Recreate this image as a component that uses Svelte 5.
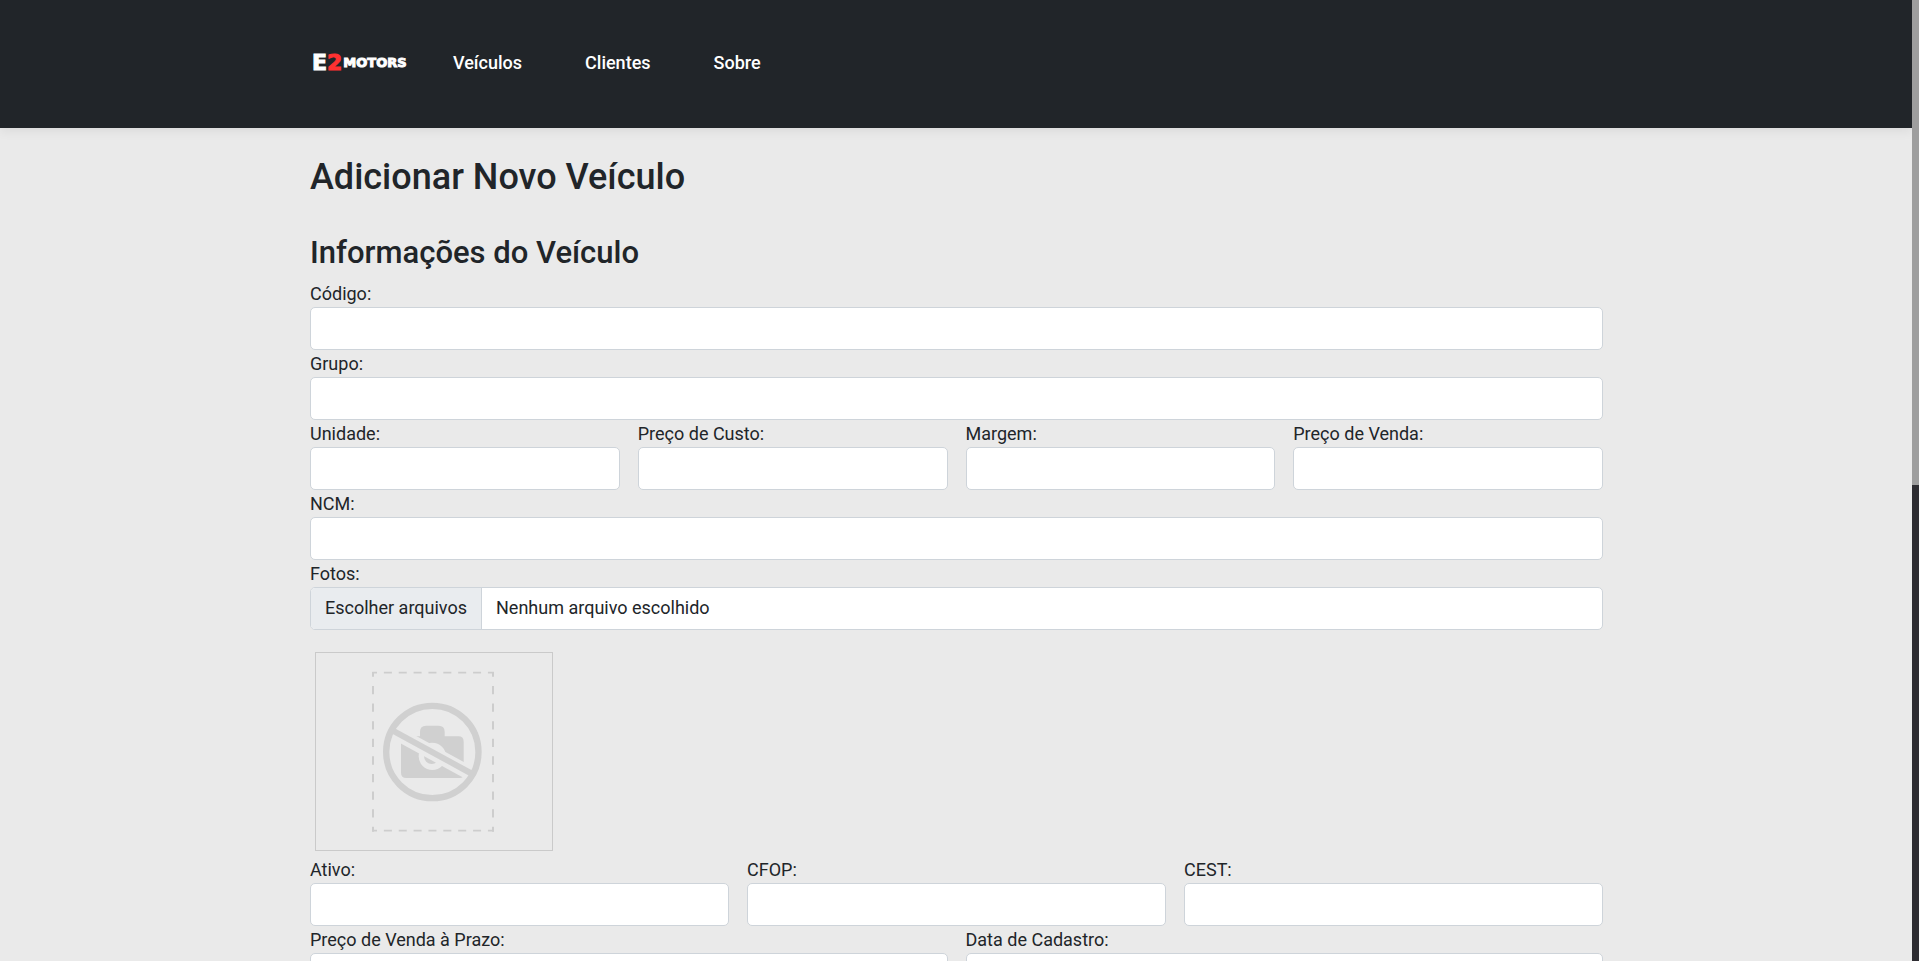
<script>
  const links = ['Veículos', 'Clientes', 'Sobre'];

  const topRows = [
    [{ id: 'codigo', label: 'Código:' }],
    [{ id: 'grupo', label: 'Grupo:' }],
    [
      { id: 'unidade', label: 'Unidade:' },
      { id: 'preco-custo', label: 'Preço de Custo:' },
      { id: 'margem', label: 'Margem:' },
      { id: 'preco-venda', label: 'Preço de Venda:' }
    ],
    [{ id: 'ncm', label: 'NCM:' }]
  ];

  const bottomRows = [
    [
      { id: 'ativo', label: 'Ativo:' },
      { id: 'cfop', label: 'CFOP:' },
      { id: 'cest', label: 'CEST:' }
    ],
    [
      { id: 'preco-prazo', label: 'Preço de Venda à Prazo:' },
      { id: 'data-cadastro', label: 'Data de Cadastro:' }
    ]
  ];
</script>

{#snippet fieldRow(fields)}
  <div class="row">
    {#each fields as field (field.id)}
      <div class="field">
        <label for={field.id}>{field.label}</label>
        <input type="text" id={field.id} name={field.id} />
      </div>
    {/each}
  </div>
{/snippet}

<div class="screen">
  <div class="page">
    <header>
      <nav class="container">
        <a class="brand" href="#inicio"><span class="big">E<span class="red">2</span></span><span class="small">MOTORS</span></a>
        <ul>
          {#each links as link}
            <li><a href="#{link.toLowerCase()}">{link}</a></li>
          {/each}
        </ul>
      </nav>
    </header>

    <main class="container">
      <h1>Adicionar Novo Veículo</h1>
      <form>
        <h2>Informações do Veículo</h2>
        {#each topRows as fields}
          {@render fieldRow(fields)}
        {/each}

        <div class="field">
          <label for="fotos">Fotos:</label>
          <div class="file">
            <input type="file" id="fotos" name="fotos" multiple />
            <label for="fotos">
              <span class="choose">Escolher arquivos</span>
              <span class="chosen">Nenhum arquivo escolhido</span>
            </label>
          </div>
        </div>

        <div class="preview">
          <svg viewBox="33 39 708 591" aria-hidden="true">
            <g fill="none" stroke="#cdcdcd">
              <path d="M202 98H567M202 572H567" stroke-width="5" stroke-dasharray="24 20.6" stroke-dashoffset="10" />
              <path d="M204 96V575M564 96V575" stroke-width="6" stroke-dasharray="25 27.8" stroke-dashoffset="11" />
            </g>
            <path
              fill="#d0d0d0"
              d="M288 289H345V275Q345 257 363 257H401Q419 257 419 275V289H460Q476 289 476 305V402Q476 414 464 414H304Q288 414 288 398Z"
            />
            <circle cx="382" cy="349" r="41" fill="#eaeaea" />
            <circle cx="380" cy="349" r="23" fill="#d0d0d0" />
            <path d="M240 260.500L524 416" stroke="#eaeaea" stroke-width="42" />
            <circle cx="382" cy="336" r="138.500" fill="none" stroke="#d0d0d0" stroke-width="19" />
            <path d="M262 271L502 402" stroke="#d0d0d0" stroke-width="18" />
          </svg>
        </div>

        {#each bottomRows as fields}
          {@render fieldRow(fields)}
        {/each}
      </form>
    </main>
  </div>
  <div class="scrollbar"><div class="thumb"></div></div>
</div>

<style>
  :global(body) {
    margin: 0;
    background: #eaeaea;
  }

  .screen {
    display: flex;
    height: 100vh;
    overflow: hidden;
    background: #eaeaea;
    color: #212529;
    font-family: Roboto, sans-serif;
    font-size: 18px;
    line-height: 27px;
  }

  .screen * {
    box-sizing: border-box;
  }

  .page {
    flex: 1;
    min-width: 0;
  }

  .container {
    width: 100%;
    max-width: 1320px;
    margin: 0 auto;
    padding: 0 13px 0 14px;
  }

  header {
    padding: 35px 0 39px;
    background: #212529;
    box-shadow: 0 4px 10px rgba(0, 0, 0, 0.06);
  }

  nav {
    display: flex;
    align-items: center;
    gap: 44px;
    height: 54px;
  }

  nav a {
    color: #fff;
    text-decoration: none;
  }

  .brand {
    display: flex;
    align-items: center;
    gap: 1px;
    width: 99px;
    padding-left: 2px;
    font-family: 'DejaVu Sans', sans-serif;
    font-weight: 700;
    -webkit-text-stroke: 1px currentColor;
  }

  .big {
    font-size: 22px;
  }

  .small {
    font-size: 13px;
  }

  .red {
    color: #ff3131;
  }

  ul {
    display: flex;
    gap: 63px;
    margin: 0;
    padding: 0;
    list-style: none;
    font-weight: 500;
  }

  main.container {
    padding-top: 28px;
  }

  h1,
  h2 {
    margin: 0;
    font-weight: 500;
  }

  h1 {
    margin-bottom: 35px;
    font-size: 36px;
    line-height: 43px;
  }

  h2 {
    margin-bottom: 8px;
    font-size: 31px;
    line-height: 38px;
  }

  .row {
    display: flex;
    gap: 18px;
  }

  .field {
    flex: 1;
    min-width: 0;
  }

  .field > label {
    display: block;
    width: fit-content;
  }

  input[type='text'] {
    display: block;
    width: 100%;
    height: 43px;
    padding: 6px 14px;
    border: 1px solid #ced4da;
    border-radius: 5px;
    background: #fff;
    color: inherit;
    font: inherit;
  }

  .file {
    position: relative;
    height: 43px;
    overflow: hidden;
    border: 1px solid #ced4da;
    border-radius: 5px;
    background: #fff;
  }

  .file input {
    position: absolute;
    inset: 0;
    width: 100%;
    opacity: 0;
  }

  .file label {
    display: flex;
    height: 100%;
  }

  .choose,
  .chosen {
    padding: 6px 14px;
  }

  .choose {
    border-right: 1px solid #ced4da;
    background: #e9ecef;
  }

  .preview {
    width: 238px;
    margin: 22px 5px 5px;
    border: 1px solid #cacaca;
  }

  .preview svg {
    display: block;
    width: 100%;
  }

  .scrollbar {
    width: 7px;
    background: #2e2d32;
  }

  .thumb {
    height: 50.5%;
    background: #9e9e9e;
  }
</style>
